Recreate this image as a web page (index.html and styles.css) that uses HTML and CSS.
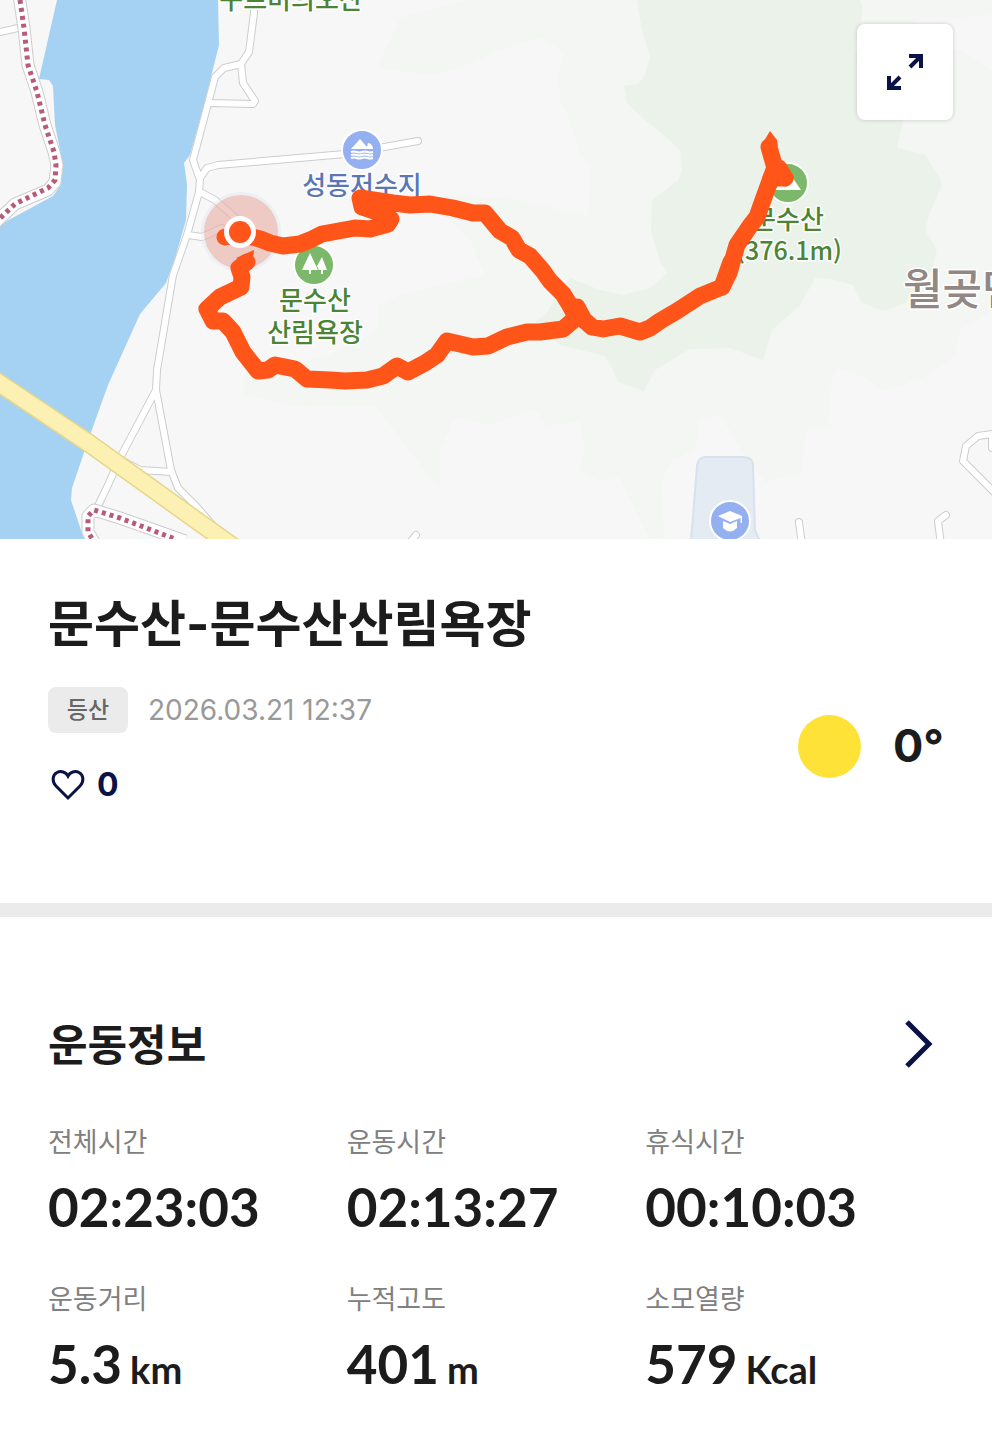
FILE: index.html
```
<!DOCTYPE html>
<html lang="ko">
<head>
    <meta charset="UTF-8">
    <meta name="viewport" content="width=device-width, initial-scale=1.0">
    <title>문수산-문수산산림욕장</title>
    <link rel="stylesheet" href="styles.css">
</head>
<body>

<div class="map">
    <svg class="map-canvas" viewBox="0 0 992 539" role="img" aria-label="문수산 등산 경로 지도">
        <!-- Terrain -->
        <rect class="land" width="992" height="539"/>
        <path class="hill" d="M465 0L400 18L377 68L430 75L460 68L500 50L540 38L565 52L558 75L560 100L570 120L578 150L591 165L588 217L520 200L450 195L430 202L470 240L485 275L400 295L378 305L378 330L330 355L245 375L243 395L300 407L375 405L390 425L440 490L440 450L455 417L490 425L535 409L545 425L580 422L585 450L580 472L600 481L620 478L645 530L650 539H664L662 480L672 460L695 450L700 418L720 415L745 455L765 482L800 474L807 430L828 425L832 380L838 368L865 378L885 391L930 375L955 355L960 330L992 310V0Z"/>
        <path class="forest" d="M637 0L642 30L650 57L645 75L638 84L624 86L627 103L645 120L660 132L680 150L682 170L678 180L660 194L652 200L651 230L660 262L668 272L650 288L622 295L600 290L570 278L545 315L535 322L560 345L605 356L613 370L618 382L644 391L655 370L690 349L730 348L763 360L772 330L800 305L815 278L830 279L853 285L862 303L883 311L905 303L932 270L937 250L925 230L930 212L942 185L940 178L925 155L897 148L903 120L855 50L863 10L860 0Z"/>
        <path class="land" d="M912 20L992 15V70L960 50L930 45Z"/>
        <path class="water" d="M57 0L39 79L49 80L53 86L55 125L62 160L61 185L53 196L5 222L0 226V539H84L71 500L72 488L90 435L108 385L140 314L166 283L175 258L186 220L187 185L184 163L190 155L204 105L219 45L218 0Z"/>

        <!-- School grounds -->
        <path class="campus" d="M691 541L697 466Q698 457 706 457H743Q753 457 753 466L755 530L760 541"/>

        <!-- Roads: grey casing first, white on top -->
        <path id="roads" class="road-casing" d="M254 -5V13L249 52L241 64L224 68L215 77L193 160L200 180L199 192L187 235L173 275L157 370L156 390L120 458L108 485L96 510M241 64L243 83L255 101L253 104L211 103M200 178L207 168L218 165L345 154L418 141M200 192L215 200L238 220M188 235L202 237L222 228M156 390L171 470L178 488L195 505L230 545M171 472L140 470L123 461M0 32L22 27M799 522L802 545M946 515L938 521L941 545M1000 433L978 436L966 446L963 461L1000 498M992 436V448M416 535L408 545"/>
        <path class="road-fill" d="M254 -5V13L249 52L241 64L224 68L215 77L193 160L200 180L199 192L187 235L173 275L157 370L156 390L120 458L108 485L96 510M241 64L243 83L255 101L253 104L211 103M200 178L207 168L218 165L345 154L418 141M200 192L215 200L238 220M188 235L202 237L222 228M156 390L171 470L178 488L195 505L230 545M171 472L140 470L123 461M0 32L22 27M799 522L802 545M946 515L938 521L941 545M1000 433L978 436L966 446L963 461L1000 498M992 436V448M416 535L408 545"/>
        <path class="trail-casing" d="M19 -5L24 28L28 65L37 92L45 125L54 152L57 165L55 182L48 190L15 204L-4 222M100 552L88 532L88 516L94 510L120 518L185 541"/>
        <path class="trail-fill" d="M19 -5L24 28L28 65L37 92L45 125L54 152L57 165L55 182L48 190L15 204L-4 222M100 552L88 532L88 516L94 510L120 518L185 541"/>
        <path class="trail-dots" d="M20 0L24 28L28 65L37 92L45 125L54 152L56 165L55 180L48 188L15 204L-4 222M96 545L88 532L88 516L94 510L120 518L175 539"/>
        <path class="highway-casing" d="M-10 377L90 444L235 548"/>
        <path class="highway-fill" d="M-10 377L90 444L235 548"/>

        <!-- Start halo -->
        <circle class="halo-outer" cx="241" cy="232" r="40"/>
        <circle class="halo" cx="241" cy="232" r="37"/>

        <!-- Places -->
        <g class="place green">
            <text x="291" y="9">구르미의오산</text>
            <text x="315" y="310">문수산</text>
            <text x="315" y="342">산림욕장</text>
            <text x="788" y="229">문수산</text>
            <text class="height" x="789" y="260">(376.1m)</text>
        </g>
        <g class="place blue">
            <text x="362" y="195">성동저수지</text>
        </g>
        <text class="district" x="903" y="305">월곶면</text>

        <circle class="pin pin-blue" cx="362" cy="150" r="20"/>
        <path class="glyph" d="M351 149L360 139L367 147L368 143C371 143 373 146 373 149Z"/>
        <path class="wave" d="M351 152q3 -1 5.500 0t5.500 0t5.500 0t5.500 0M351 155q3 -1 5.500 0t5.500 0t5.500 0t5.500 0M351 158q3 -1 5.500 0t5.500 0t5.500 0t5.500 0"/>

        <circle class="pin pin-green" cx="314" cy="265" r="20"/>
        <path class="glyph" d="M310 253L318 270H311V274H309V270H302ZM322 257L327 270H323V274H321V270H319L317 266Z"/>

        <circle class="pin pin-green" cx="788" cy="183" r="20"/>
        <path class="glyph" d="M788 171L801 190H775Z"/>

        <circle class="pin pin-blue" cx="730" cy="521" r="20"/>
        <path class="glyph" d="M730 511L742 516V523H740.500V518L730 522L718 516ZM723 521L730 524L737 521V528Q730 535 723 528Z"/>

        <!-- Recorded route -->
        <path class="route" d="M225 237L240 234L260 239L270 243L283 246L300 244L310 240L322 234L355 228L370 229L388 224L391 219L380 213L362 207L360 198L373 200L393 203L410 205L430 204L453 208L473 213L485 213L500 231L512 238L519 250L530 256L543 271L550 281L563 294L571 307L577 307L584 320L592 327L603 329L620 326L640 332L650 328L660 321L677 311L700 296L722 287L729 273L737 245L750 226L757 217L763 200L774 170L785 178"/>
        <path class="route" d="M774 178L775 168L769 147M571 307L576 318L563 329L540 332L527 332L507 337L488 346L473 347L447 341L437 355L425 363L408 372L397 366L383 376L367 380L345 381L330 380L307 379L295 369L275 365L268 370L258 371L243 352L233 332L223 321L213 321L207 309L220 297L241 287L242 277L239 268L247 262"/>
        <path class="route" d="M731 262L722 287M779 168L785 178L771 178"/>
        <path class="route-tip" d="M770 131L761 146L778 146L777 140ZM254 250L236 258L252 268Z"/>
        <circle class="start-ring" cx="240" cy="232" r="16"/>
        <circle class="start-dot" cx="240" cy="232" r="11"/>
    </svg>

    <button class="expand" type="button" aria-label="지도 확대">
        <svg width="40" height="40" viewBox="0 0 40 40">
            <path d="M24 4H36V16M36 4L25 15M16 36H4V24M4 36L15 25"/>
        </svg>
    </button>
</div>

<section class="summary">
    <h1>문수산-문수산산림욕장</h1>
    <div class="summary-row">
        <div class="meta">
            <div class="meta-line">
                <span class="badge">등산</span>
                <time datetime="2026-03-21T12:37">2026.03.21 12:37</time>
            </div>
            <button class="like" type="button" aria-label="좋아요">
                <svg width="40" height="40" viewBox="0 0 40 40">
                    <path d="M20 33L8 21C4 17 4 10 9 7.500C13 5.500 18 7 20 11C22 7 27 5.500 31 7.500C36 10 36 17 32 21Z"/>
                </svg>
                <span>0</span>
            </button>
        </div>
        <div class="weather">
            <span class="sun"></span>
            <span class="temp">0°</span>
        </div>
    </div>
</section>

<section class="info">
    <div class="info-head">
        <h2>운동정보</h2>
        <a class="more" href="#stats" aria-label="운동정보 더보기">
            <svg width="32" height="56" viewBox="0 0 32 56">
                <path d="M4 5L26 27L4 49"/>
            </svg>
        </a>
    </div>
    <dl class="stats" id="stats">
        <div>
            <dt>전체시간</dt>
            <dd>02:23:03</dd>
        </div>
        <div>
            <dt>운동시간</dt>
            <dd>02:13:27</dd>
        </div>
        <div>
            <dt>휴식시간</dt>
            <dd>00:10:03</dd>
        </div>
        <div>
            <dt>운동거리</dt>
            <dd>5.3<span class="unit">km</span></dd>
        </div>
        <div>
            <dt>누적고도</dt>
            <dd>401<span class="unit">m</span></dd>
        </div>
        <div>
            <dt>소모열량</dt>
            <dd>579<span class="unit">Kcal</span></dd>
        </div>
    </dl>
</section>

</body>
</html>
```
FILE: styles.css
```
* {
    box-sizing: border-box;
}
body {
    margin: 0;
    background-color: #fff;
    color: #1c1c1c;
    font-family: Inter, "Noto Sans CJK KR", sans-serif;
}
h1, h2, dl, dd {
    margin: 0;
}
button {
    padding: 0;
    border: none;
    background: none;
    font-family: inherit;
    cursor: pointer;
}

/* Map */
.map {
    position: relative;
}
.map-canvas {
    display: block;
    width: 100%;
    height: auto;
}
.land {
    fill: #f7f7f7;
}
.hill {
    fill: #f3f6f3;
}
.forest {
    fill: #eaf2ea;
}
.water {
    fill: #a5d2f3;
}
.campus {
    fill: #e4ebf3;
    stroke: #d7e2ee;
    stroke-width: 2;
}
.road-casing, .road-fill, .trail-casing, .trail-fill, .trail-dots,
.highway-casing, .highway-fill, .route {
    fill: none;
    stroke-linejoin: round;
}
.road-casing {
    stroke: #cdcdcd;
    stroke-width: 8;
    stroke-linecap: round;
}
.road-fill {
    stroke: #fff;
    stroke-width: 6;
    stroke-linecap: round;
}
.trail-casing {
    stroke: #cdcdcd;
    stroke-width: 13;
}
.trail-fill {
    stroke: #fff;
    stroke-width: 11;
}
.trail-dots {
    stroke: #b85a7c;
    stroke-width: 5;
    stroke-dasharray: 4 4;
}
.highway-casing {
    stroke: #e6d68c;
    stroke-width: 19;
}
.highway-fill {
    stroke: #fcf0b2;
    stroke-width: 16;
}
.halo-outer {
    fill: #e4e8f2;
    opacity: 0.5;
}
.halo {
    fill: #f26a4a;
    opacity: 0.28;
}
.place {
    font-family: "Noto Sans CJK KR", sans-serif;
    font-size: 26px;
    font-weight: 500;
    text-anchor: middle;
    stroke: #fff;
    stroke-width: 3px;
    stroke-linejoin: round;
    paint-order: stroke;
}
.height {
    font-size: 25px;
}
.green {
    fill: #4b8433;
}
.blue {
    fill: #5b76b5;
}
.district {
    font-family: "Noto Sans CJK KR", sans-serif;
    font-size: 43px;
    font-weight: 500;
    fill: #918885;
    stroke: #fff;
    stroke-width: 3px;
    stroke-linejoin: round;
    paint-order: stroke;
}
.pin {
    stroke: #fff;
    stroke-width: 2;
}
.pin-blue {
    fill: #94b0f0;
}
.pin-green {
    fill: #7cb869;
}
.glyph {
    fill: #fff;
}
.wave {
    fill: none;
    stroke: #fff;
    stroke-width: 2;
}
.route {
    stroke: #ff5519;
    stroke-width: 17;
    stroke-linecap: round;
}
.route-tip, .start-dot {
    fill: #ff5519;
}
.start-ring {
    fill: #fff;
}
.expand {
    position: absolute;
    top: 24px;
    right: 39px;
    display: flex;
    justify-content: center;
    align-items: center;
    width: 96px;
    height: 96px;
    border-radius: 8px;
    background-color: #fff;
    box-shadow: 0 0 4px rgba(0, 0, 0, 0.18);
}
.expand path {
    fill: none;
    stroke: #0a1246;
    stroke-width: 4;
}

/* Summary */
.summary {
    padding: 53px 48px 98px;
    border-bottom: 14px solid #ebebeb;
}
h1 {
    font-size: 50px;
    line-height: 64px;
    font-weight: 700;
}
.summary-row {
    display: flex;
    justify-content: space-between;
    align-items: center;
    margin-top: 31px;
}
.meta-line {
    display: flex;
    align-items: center;
    gap: 20px;
}
.badge {
    min-width: 80px;
    border-radius: 8px;
    background-color: #ebebeb;
    color: #666;
    font-size: 23px;
    line-height: 46px;
    font-weight: 500;
    text-align: center;
}
time {
    color: #999;
    font-size: 28px;
    line-height: 46px;
}
.like {
    display: flex;
    align-items: center;
    gap: 9px;
    margin-top: 32px;
    color: #0a1246;
    font-size: 32px;
    line-height: 40px;
    font-weight: 700;
}
.like path {
    fill: none;
    stroke: #0a1246;
    stroke-width: 3;
}
.weather {
    display: flex;
    align-items: center;
    gap: 32px;
}
.sun {
    width: 63px;
    height: 63px;
    border-radius: 50%;
    background-color: #fee238;
}
.temp {
    font-size: 45px;
    line-height: 56px;
    font-weight: 700;
}

/* Workout info */
.info {
    padding: 96px 48px 44px;
}
.info-head {
    display: flex;
    justify-content: space-between;
    align-items: center;
    margin-bottom: 46px;
}
h2 {
    font-size: 43px;
    line-height: 64px;
    font-weight: 700;
}
.more {
    display: flex;
    padding-right: 9px;
}
.more path {
    fill: none;
    stroke: #0a1246;
    stroke-width: 5;
}
.stats {
    display: grid;
    grid-template-columns: repeat(3, 1fr);
    row-gap: 43px;
}
dt {
    color: #808080;
    font-size: 27px;
    line-height: 40px;
}
dd {
    margin-top: 14px;
    font-family: Lato, "Noto Sans CJK KR", sans-serif;
    font-size: 53px;
    line-height: 60px;
    font-weight: 700;
}
.unit {
    margin-left: 8px;
    font-size: 38px;
}
```
